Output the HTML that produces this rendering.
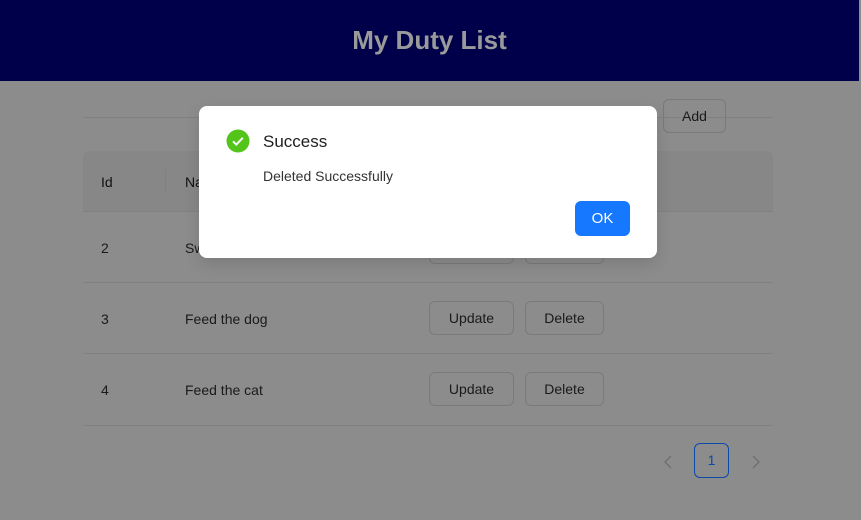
<!DOCTYPE html><html><head><style>
*{box-sizing:border-box;margin:0;padding:0}
body{width:861px;height:520px;overflow:hidden;background:#8c8c8c;font-family:"Liberation Sans",sans-serif;position:relative;color:#1a1a1a}
.hdr{position:absolute;left:0;top:0;width:859px;height:81px;background:#00004a;color:#9a9a9a;font-size:26px;font-weight:bold;text-align:center;line-height:80px}
.edge{position:absolute;left:859px;top:0;width:2px;height:520px;background:#8c8c8c}
.btn{position:absolute;border:1px solid #7a7a7a;border-radius:6px;height:34px;font-size:14px;text-align:center;line-height:32px;color:#1a1a1a}
.line{position:absolute;left:83px;width:690px;height:1px;background:#818181}
.t{position:absolute;font-size:14px}
</style></head><body>
<div class="hdr">My Duty List</div>
<div class="edge"></div>
<div class="line" style="top:117px;"></div>
<div class="btn" style="left:663px;top:99px;width:63px">Add</div>
<div style="position:absolute;left:83px;top:151px;width:690px;height:60px;background:#878787;border-radius:6px 6px 0 0"></div>
<div style="position:absolute;left:165px;top:170px;width:1px;height:22px;background:#808080"></div>
<div class="line" style="top:211px"></div>
<div class="t" style="left:101px;top:174px;color:#111">Id</div>
<div class="t" style="left:185px;top:174px;color:#111">Name</div>
<div class="t" style="left:101px;top:240px">2</div>
<div class="t" style="left:185px;top:240px">Swim</div>
<div class="btn" style="left:429px;top:230px;width:85px">Update</div>
<div class="btn" style="left:525px;top:230px;width:79px">Delete</div>
<div class="line" style="top:282px"></div>
<div class="t" style="left:101px;top:311px">3</div>
<div class="t" style="left:185px;top:311px">Feed the dog</div>
<div class="btn" style="left:429px;top:301px;width:85px">Update</div>
<div class="btn" style="left:525px;top:301px;width:79px">Delete</div>
<div class="line" style="top:353px"></div>
<div class="t" style="left:101px;top:382px">4</div>
<div class="t" style="left:185px;top:382px">Feed the cat</div>
<div class="btn" style="left:429px;top:372px;width:85px">Update</div>
<div class="btn" style="left:525px;top:372px;width:79px">Delete</div>
<div class="line" style="top:425px"></div>
<svg style="position:absolute;left:662px;top:455px" width="12" height="14"><path d="M9 1L3 7l6 6" stroke="#6e6e6e" stroke-width="1.3" fill="none"/></svg>
<div style="position:absolute;left:694px;top:443px;width:35px;height:35px;border:1px solid #0b4aa8;border-radius:6px;color:#0b4aa8;text-align:center;line-height:33px;font-size:14px">1</div>
<svg style="position:absolute;left:750px;top:455px" width="12" height="14"><path d="M3 1l6 6-6 6" stroke="#6e6e6e" stroke-width="1.3" fill="none"/></svg>
<div style="position:absolute;left:199px;top:106px;width:458px;height:152px;background:#fff;border-radius:8px;box-shadow:0 6px 16px rgba(0,0,0,.12)"></div>
<svg style="position:absolute;left:226px;top:129px" width="24" height="24"><circle cx="12" cy="12" r="11.5" fill="#52c41a"/><path d="M7 12.3l3.3 3.3 6.5-6.8" stroke="#fff" stroke-width="2" fill="none"/></svg>
<div class="t" style="left:263px;top:132px;font-size:17px;color:#1f1f1f">Success</div>
<div class="t" style="left:263px;top:168px;color:#333">Deleted Successfully</div>
<div style="position:absolute;left:575px;top:201px;width:55px;height:35px;background:#1677ff;border-radius:6px;color:#fff;text-align:center;line-height:35px;font-size:15px">OK</div>
</body></html>
